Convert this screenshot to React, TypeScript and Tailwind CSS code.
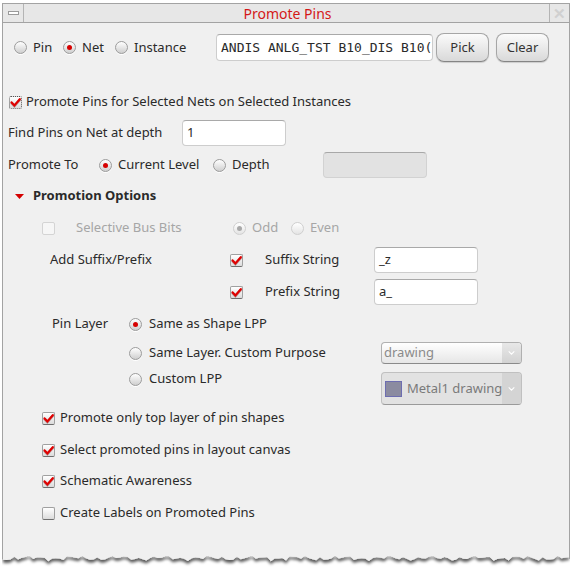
import React from 'react';

const sans = "font-['Noto_Sans',sans-serif]";

function Radio({ on, disabled }: { on?: boolean; disabled?: boolean }) {
  return (
    <span
      className={
        disabled
          ? 'inline-flex h-[13px] w-[13px] shrink-0 items-center justify-center rounded-full border border-[#cfcfcf] bg-gradient-to-b from-white to-[#e4e4e4]'
          : 'inline-flex h-[13px] w-[13px] shrink-0 items-center justify-center rounded-full border border-[#9c9c9c] bg-gradient-to-b from-white to-[#cfcfcf] shadow-[0_1px_0_#fff]'
      }
    >
      {on && <span className={disabled ? 'h-[5px] w-[5px] rounded-full bg-[#a8a8a8]' : 'h-[5px] w-[5px] rounded-full bg-[#d60000]'} />}
    </span>
  );
}

function Check({ on, disabled, focus }: { on?: boolean; disabled?: boolean; focus?: boolean }) {
  return (
    <span
      className={
        disabled
          ? 'relative inline-block h-[13px] w-[13px] shrink-0 rounded-[2px] border border-[#d4d4d4] bg-[#f6f6f6]'
          : focus
          ? 'relative inline-block h-[13px] w-[13px] shrink-0 rounded-[2px] border border-dotted border-[#555] bg-gradient-to-b from-white to-[#dcdcdc]'
          : 'relative inline-block h-[13px] w-[13px] shrink-0 rounded-[2px] border border-[#a0a0a0] border-b-[#6e6e6e] bg-gradient-to-b from-white to-[#dcdcdc]'
      }
    >
      {on && (
        <svg viewBox="0 0 13 13" className="absolute left-[-1px] top-[-1px] h-[13px] w-[13px]">
          <path d="M2.6 6.4 L5.4 9.4 L10.8 3.2" fill="none" stroke="#5a0000" strokeWidth="2.6" strokeLinecap="round" opacity="0.35" transform="translate(0 0.6)" />
          <path d="M2.6 6.4 L5.4 9.4 L10.8 3.2" fill="none" stroke="#e00000" strokeWidth="2.2" strokeLinecap="round" />
        </svg>
      )}
    </span>
  );
}

function Field({ value, className, mono }: { value: string; className: string; mono?: boolean }) {
  return (
    <div
      className={`flex items-center overflow-hidden whitespace-nowrap rounded-[4px] border border-[#cdcdcd] border-t-[#a9a9a9] bg-white pl-[4px] ${className} ${
        mono ? "font-['DejaVu_Sans_Mono',monospace] text-[13px]" : 'text-[13px]'
      }`}
    >
      {value}
    </div>
  );
}

function Btn({ label }: { label: string }) {
  return (
    <div className="flex h-[29px] w-[53px] items-center justify-center rounded-[8px] border border-[#a6a6a6] border-b-[#858585] bg-gradient-to-b from-[#fbfbfb] to-[#d9d9d9] text-[13px] text-[#333] shadow-[0_1px_1px_rgba(0,0,0,0.15)]">
      {label}
    </div>
  );
}

function Caret() {
  return (
    <svg viewBox="0 0 8 5" className="h-[4px] w-[7px]">
      <path d="M0.5 0.5 L4 4 L7.5 0.5" fill="none" stroke="#ffffff" strokeWidth="1.3" />
    </svg>
  );
}

function TornEdge() {
  const pts: string[] = [];
  const n = 150;
  for (let i = 0; i <= n; i++) {
    const x = (566 / n) * i;
    const y = 4 + 1.5 * Math.sin(i * 1.7) + 1.2 * Math.sin(i * 0.53 + 1) + 0.8 * Math.cos(i * 3.1);
    pts.push(`${x.toFixed(1)},${y.toFixed(1)}`);
  }
  const poly = `0,0 566,0 ${pts.reverse().join(' ')}`;
  return (
    <svg width="568" height="18" viewBox="-1 0 568 18" className="block">
      <defs>
        <filter id="sh" x="-5%" y="-50%" width="110%" height="300%">
          <feDropShadow dx="0" dy="3" stdDeviation="1.8" floodColor="#000" floodOpacity="0.65" />
        </filter>
      </defs>
      <polygon points={poly} fill="#f0f0f0" filter="url(#sh)" />
      <line x1="-0.5" y1="0" x2="-0.5" y2="5" stroke="#a3a3a3" />
      <line x1="566.5" y1="0" x2="566.5" y2="5" stroke="#a3a3a3" />
    </svg>
  );
}

export default function App() {
  return (
    <div className={`h-[570px] w-[572px] overflow-hidden bg-white pl-[2px] pt-[3px] text-[13px] text-[#2a2a2a] ${sans}`}>
      <div className="w-[568px]">
        {/* title bar */}
        <div className="flex h-[20px] items-stretch border border-[#a3a3a3] bg-[#e7e7e7]">
          <div className="flex w-[21px] items-center justify-center border-r border-[#b4b4b4]">
            <span className="h-[4px] w-[11px] border border-[#9a9a9a] bg-white" />
          </div>
          <div className="flex flex-1 items-center justify-center pl-[2px] text-[14px] text-[#d41818]">Promote Pins</div>
          <div className="flex w-[20px] items-center justify-center border-l border-[#b4b4b4] text-[15px] font-bold leading-none text-[#d0d0d0]">✕</div>
        </div>

        {/* body */}
        <div className="flex h-[531px] flex-col border-x border-[#a3a3a3] bg-[#f0f0f0]">
          {/* row 1 */}
          <div className="mt-[10px] flex h-[29px] items-center">
            <div className="ml-[11px] flex w-[49px] items-center gap-[6px]">
              <Radio />
              <span>Pin</span>
            </div>
            <div className="flex w-[52px] items-center gap-[6px]">
              <Radio on />
              <span>Net</span>
            </div>
            <div className="flex w-[101px] items-center gap-[6px]">
              <Radio />
              <span>Instance</span>
            </div>
            <Field mono value="ANDIS ANLG_TST B10_DIS B10(" className="h-[27px] w-[217px]" />
            <div className="ml-[3px] flex gap-[7px]">
              <Btn label="Pick" />
              <Btn label="Clear" />
            </div>
          </div>

          {/* promote for selected */}
          <div className="mt-[30px] flex h-[20px] items-center pl-[6px]">
            <Check on focus />
            <span className="ml-[4px]">Promote Pins for Selected Nets on Selected Instances</span>
          </div>

          {/* find pins */}
          <div className="mt-[8px] flex h-[26px] items-center pl-[5px]">
            <span className="w-[174px]">Find Pins on Net at depth</span>
            <Field value="1" className="h-[26px] w-[104px]" />
          </div>

          {/* promote to */}
          <div className="mt-[6px] flex h-[26px] items-center pl-[5px]">
            <span className="w-[91px]">Promote To</span>
            <div className="flex w-[114px] items-center gap-[6px]">
              <Radio on />
              <span>Current Level</span>
            </div>
            <div className="flex w-[110px] items-center gap-[6px]">
              <Radio />
              <span>Depth</span>
            </div>
            <div className="h-[26px] w-[104px] rounded-[4px] border border-[#d2d2d2] border-t-[#a8a8a8] bg-[#e2e2e2]" />
          </div>

          {/* promotion options */}
          <div className="mt-[8px] flex h-[20px] items-center pl-[12px]">
            <svg viewBox="0 0 9 5" className="h-[5px] w-[9px]">
              <path d="M0 0 H9 L4.5 5 Z" fill="#d40000" />
            </svg>
            <span className="ml-[9px] font-bold">Promotion Options</span>
          </div>

          {/* selective bus bits */}
          <div className="mt-[12px] flex h-[20px] items-center pl-[39px] text-[#a6a6a6]">
            <Check disabled />
            <span className="ml-[21px] w-[157px]">Selective Bus Bits</span>
            <div className="flex w-[58px] items-center gap-[6px]">
              <Radio on disabled />
              <span>Odd</span>
            </div>
            <div className="flex items-center gap-[6px]">
              <Radio disabled />
              <span>Even</span>
            </div>
          </div>

          {/* suffix */}
          <div className="mt-[9px] flex h-[26px] items-center pl-[47px]">
            <span className="w-[180px]">Add Suffix/Prefix</span>
            <Check on />
            <span className="ml-[22px] w-[109px]">Suffix String</span>
            <Field value="_z" className="h-[26px] w-[104px]" />
          </div>

          {/* prefix */}
          <div className="mt-[6px] flex h-[26px] items-center pl-[227px]">
            <Check on />
            <span className="ml-[22px] w-[109px]">Prefix String</span>
            <Field value="a_" className="h-[26px] w-[104px]" />
          </div>

          {/* pin layer */}
          <div className="mt-[9px] flex h-[20px] items-center pl-[49px]">
            <span className="w-[77px]">Pin Layer</span>
            <Radio on />
            <span className="ml-[7px]">Same as Shape LPP</span>
          </div>

          {/* same layer custom purpose */}
          <div className="mt-[8px] flex h-[22px] items-center pl-[126px]">
            <Radio />
            <span className="ml-[7px] w-[232px]">Same Layer. Custom Purpose</span>
            <div className="flex h-[22px] w-[141px] items-stretch overflow-hidden rounded-[4px] border border-[#b0b0b0] border-b-[#8a8a8a] bg-gradient-to-b from-white to-[#e6e6e6]">
              <span className="flex flex-1 items-center pl-[2px] text-[#8a8a8a]">drawing</span>
              <span className="flex w-[19px] items-center justify-center bg-gradient-to-b from-[#e8e8e8] to-[#d2d2d2]">
                <Caret />
              </span>
            </div>
          </div>

          {/* custom lpp */}
          <div className="mt-[6px] flex items-start pl-[126px]">
            <div className="flex h-[18px] items-center">
              <Radio />
              <span className="ml-[7px] w-[232px]">Custom LPP</span>
            </div>
            <div className="mt-[2px] flex h-[33px] w-[141px] items-stretch overflow-hidden rounded-[4px] border border-[#c0c0c0] border-b-[#9a9a9a] bg-[#e2e2e2]">
              <span className="flex flex-1 items-center whitespace-nowrap pl-[3px] text-[13px] text-[#7a7a7a]">
                <span className="mr-[5px] h-[16px] w-[17px] shrink-0 border border-[#6d6db0] bg-[#8b8ba0]" />
                Metal1 drawing
              </span>
              <span className="flex w-[19px] shrink-0 items-center justify-center bg-[#d4d4d4]">
                <Caret />
              </span>
            </div>
          </div>

          {/* bottom checks */}
          <div className="mt-[3px] flex h-[20px] items-center pl-[39px]">
            <Check on />
            <span className="ml-[5px]">Promote only top layer of pin shapes</span>
          </div>
          <div className="mt-[12px] flex h-[20px] items-center pl-[39px]">
            <Check on />
            <span className="ml-[5px]">Select promoted pins in layout canvas</span>
          </div>
          <div className="mt-[11px] flex h-[20px] items-center pl-[39px]">
            <Check on />
            <span className="ml-[5px]">Schematic Awareness</span>
          </div>
          <div className="mt-[12px] flex h-[20px] items-center pl-[39px]">
            <Check />
            <span className="ml-[5px]">Create Labels on Promoted Pins</span>
          </div>
        </div>
        <TornEdge />
      </div>
    </div>
  );
}
